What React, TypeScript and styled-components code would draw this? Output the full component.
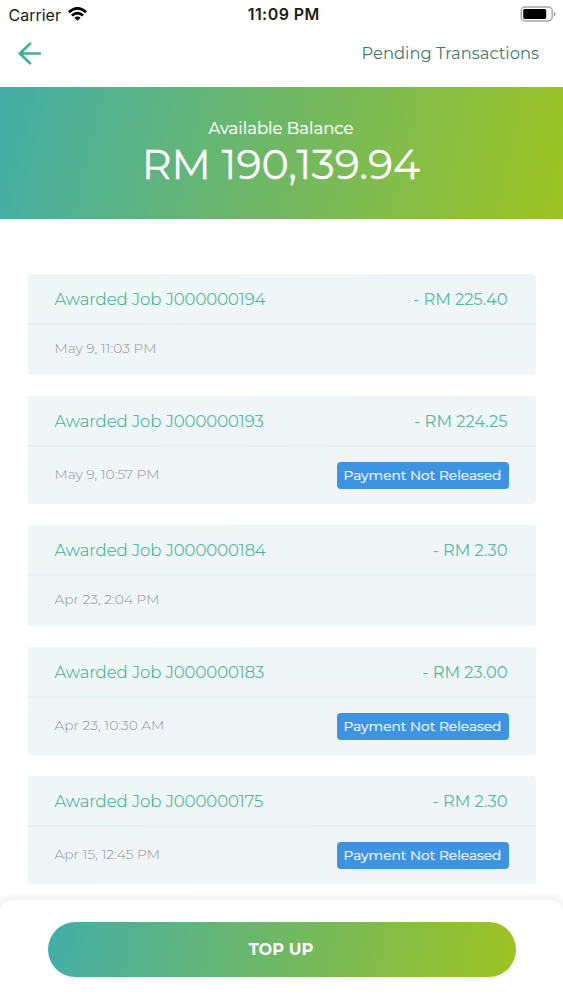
import React from "react";
import styled, { createGlobalStyle } from "styled-components";

const GlobalStyle = createGlobalStyle`
  * { box-sizing: border-box; }
  body { margin: 0; background: #fefffe; }
`;

const Screen = styled.div`
  height: 1000px;
  display: flex;
  flex-direction: column;
  overflow: hidden;
  background: #fefffe;
  font-family: Montserrat, Inter, sans-serif;
`;

const StatusBar = styled.header`
  height: 30px;
  flex: none;
  display: grid;
  grid-template-columns: 1fr auto 1fr;
  align-items: center;
  padding: 0 7px 2px 8.5px;
  font-family: Inter, sans-serif;
  font-size: 16px;
  line-height: 20px;
  color: #1c1c1c;
`;

const Carrier = styled.div`
  display: flex;
  align-items: center;
  gap: 7px;
`;

const CarrierName = styled.span`
  padding-top: 1px;
`;

const Clock = styled.div`
  padding: 0 0 0 3px;
  font-weight: 600;
  letter-spacing: 0.45px;
`;

const BatterySlot = styled.div`
  display: flex;
  justify-content: flex-end;
`;

const NavBar = styled.nav`
  height: 57px;
  flex: none;
  display: flex;
  justify-content: space-between;
  align-items: flex-start;
  padding: 12px 24px 0 18px;
`;

const BackButton = styled.button`
  padding: 0;
  border: 0;
  background: none;
  display: flex;
`;

const PendingLink = styled.a`
  margin-top: -1px;
  font-size: 16.35px;
  line-height: 24px;
  color: #45776c;
`;

const BalanceBanner = styled.section`
  height: 132px;
  flex: none;
  display: flex;
  flex-direction: column;
  align-items: center;
  padding: 29px 1px 0 0;
  color: #fff;
  background: linear-gradient(103deg, #43aea8 0%, #6cb76b 45%, #9ec321 100%);
`;

const BalanceLabel = styled.div`
  font-size: 16.5px;
  font-weight: 400;
  -webkit-text-stroke: 0.2px #fff;
  line-height: 24px;
`;

const BalanceAmount = styled.div`
  font-size: 41.2px;
  font-weight: 400;
  -webkit-text-stroke: 0.3px #fff;
  line-height: 48px;
`;

const Transactions = styled.main`
  flex: 1;
  min-height: 0;
  overflow: hidden;
  display: flex;
  flex-direction: column;
  gap: 21px;
  padding: 55px 27.5px 0 27.5px;
`;

const Card = styled.article`
  flex: none;
  border-radius: 3px;
  background: linear-gradient(170deg, #eff7f6, #f0f5f8 60%, #f1f5f8);
`;

const CardHeader = styled.div`
  height: 50.5px;
  display: flex;
  align-items: center;
  justify-content: space-between;
  padding: 1px 28px 0 27px;
  border-bottom: 2px solid #e5f0ef;
  font-size: 16.5px;
  font-weight: 300;
  color: #3fb093;
`;

const JobTitle = styled.span`
  -webkit-text-stroke: 0.15px currentColor;
`;

const Amount = styled.span`
  font-size: 16.3px;
  font-weight: 400;
  color: #55b99e;
`;

const CardBody = styled.div<{ $tall: boolean }>`
  height: ${(p) => (p.$tall ? 57.3 : 50.8)}px;
  display: flex;
  align-items: flex-start;
  justify-content: space-between;
  padding: ${(p) => (p.$tall ? "15.5px" : "13.5px")} 27px 0 27px;
`;

const DateText = styled.time<{ $tall: boolean }>`
  font-size: 13.8px;
  line-height: 20px;
  font-weight: 300;
  color: #8f9497;
  padding-top: ${(p) => (p.$tall ? "1.5px" : "0")};
`;

const Badge = styled.span`
  width: 172px;
  height: 27px;
  border-radius: 4px;
  background: #3f94e2;
  color: #f4faff;
  font-size: 13.75px;
  font-weight: 400;
  -webkit-text-stroke: 0.2px #f4faff;
  line-height: 27px;
  text-align: center;
`;

const BottomSheet = styled.footer`
  height: 100px;
  flex: none;
  position: relative;
  padding: 22px 47.5px 0;
  border-radius: 12px 12px 0 0;
  background: #fff;
  box-shadow: 0 -2px 4px 3px rgba(0, 0, 0, 0.045);
`;

const TopUpButton = styled.button`
  display: block;
  width: 100%;
  height: 54.5px;
  padding: 0 1px 0 0;
  border: 0;
  border-radius: 28px;
  background: linear-gradient(100deg, #43aea8 0%, #6cb76b 45%, #9ec321 100%);
  box-shadow: 0 2px 3px rgba(0, 0, 0, 0.06);
  color: #fff;
  font: 700 16.2px/54px Montserrat, Inter, sans-serif;
`;

const WifiIcon = () => (
  <svg width="19" height="14" viewBox="0 0 19 14" fill="none" stroke="#000" strokeWidth="2.7">
    <path d="M0.9 5.3 Q9.5 -2.5 18.1 5.3" />
    <path d="M3.9 8.6 Q9.5 3.6 15.1 8.6" />
    <path d="M6.3 10.8 Q9.5 8 12.7 10.8 L9.5 13.8 Z" fill="#000" stroke="none" />
  </svg>
);

const BatteryIcon = () => (
  <svg width="36" height="16" viewBox="0 0 36 16">
    <rect x="1.2" y="1" width="31" height="14" rx="4" fill="#fff" stroke="#a5a5a5" strokeWidth="1.4" />
    <rect x="3.2" y="3" width="23" height="10" rx="1.5" fill="#000" />
    <path d="M34 5.5 Q37 8 34 10.5 Z" fill="#8e8e8e" />
  </svg>
);

const BackIcon = () => (
  <svg width="24" height="24" viewBox="0 0 24 24" fill="none" stroke="#43ae9b" strokeWidth="2.6" strokeLinecap="round" strokeLinejoin="round">
    <path d="M22 11.5H1.8M12 1.7L1.8 11.5L12 21.3" />
  </svg>
);

const transactions = [
  { job: "J000000194", amount: "225.40", date: "May 9, 11:03 PM", held: false },
  { job: "J000000193", amount: "224.25", date: "May 9, 10:57 PM", held: true },
  { job: "J000000184", amount: "2.30", date: "Apr 23, 2:04 PM", held: false },
  { job: "J000000183", amount: "23.00", date: "Apr 23, 10:30 AM", held: true },
  { job: "J000000175", amount: "2.30", date: "Apr 15, 12:45 PM", held: true },
];

export default function App() {
  return (
    <Screen>
      <GlobalStyle />
      <StatusBar>
        <Carrier>
          <CarrierName>Carrier</CarrierName>
          <WifiIcon />
        </Carrier>
        <Clock>11:09 PM</Clock>
        <BatterySlot>
          <BatteryIcon />
        </BatterySlot>
      </StatusBar>
      <NavBar>
        <BackButton aria-label="Back">
          <BackIcon />
        </BackButton>
        <PendingLink>Pending Transactions</PendingLink>
      </NavBar>
      <BalanceBanner>
        <BalanceLabel>Available Balance</BalanceLabel>
        <BalanceAmount>RM 190,139.94</BalanceAmount>
      </BalanceBanner>
      <Transactions>
        {transactions.map((t) => (
          <Card key={t.job}>
            <CardHeader>
              <JobTitle>Awarded Job {t.job}</JobTitle>
              <Amount>- RM {t.amount}</Amount>
            </CardHeader>
            <CardBody $tall={t.held}>
              <DateText $tall={t.held}>{t.date}</DateText>
              {t.held && <Badge>Payment Not Released</Badge>}
            </CardBody>
          </Card>
        ))}
      </Transactions>
      <BottomSheet>
        <TopUpButton>TOP UP</TopUpButton>
      </BottomSheet>
    </Screen>
  );
}
